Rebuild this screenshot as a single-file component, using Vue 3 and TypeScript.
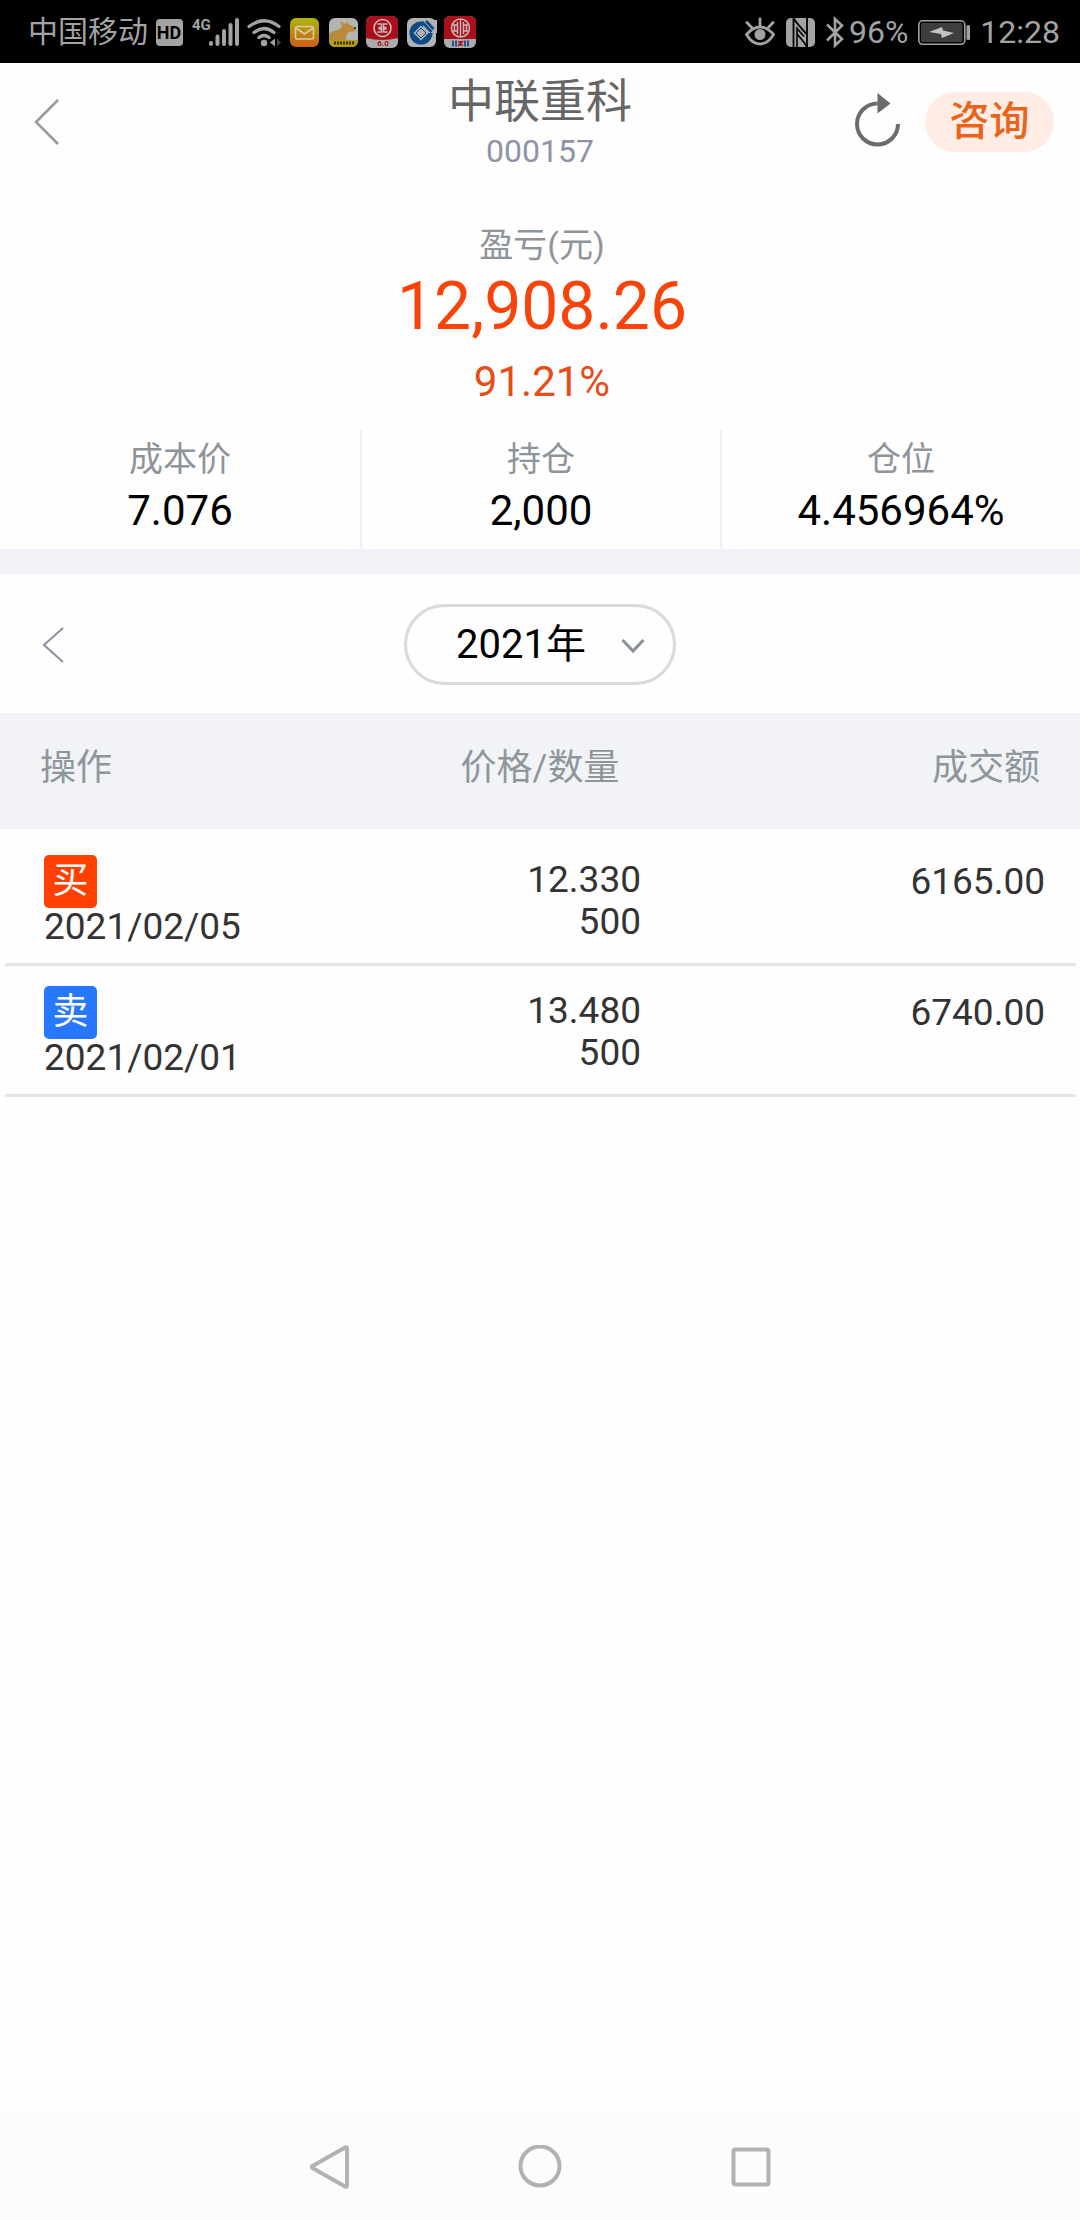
<script setup lang="ts">
import { ref } from 'vue'

interface Stat {
  label: string
  value: string
}

interface Trade {
  side: 'buy' | 'sell'
  date: string
  price: string
  quantity: string
  amount: string
}

const stats: Stat[] = [
  { label: '成本价', value: '7.076' },
  { label: '持仓', value: '2,000' },
  { label: '仓位', value: '4.456964%' },
]

const trades: Trade[] = [
  { side: 'buy', date: '2021/02/05', price: '12.330', quantity: '500', amount: '6165.00' },
  { side: 'sell', date: '2021/02/01', price: '13.480', quantity: '500', amount: '6740.00' },
]

const year = ref('2021')
</script>

<template>
  <div class="screen">
    <div class="status">
      <div class="status-left">
        <span class="carrier">中国移动</span>
        <svg width="29" height="32" viewBox="0 0 29 32">
          <rect x="1" y="3" width="27" height="27" rx="4" fill="#a3a3a3" />
          <text x="14" y="23" text-anchor="middle" class="hd">HD</text>
        </svg>
        <svg width="48" height="32" viewBox="0 0 48 32">
          <text x="1" y="14" class="net">4G</text>
          <g stroke="#a3a3a3" stroke-width="4" stroke-linecap="round">
            <path d="M20 27v1M26.500 20.500v7.500M33 15v13M39.500 9v19M46 4v24" />
          </g>
        </svg>
        <svg width="35" height="32" viewBox="0 0 35 32">
          <g fill="none" stroke="#a3a3a3" stroke-width="3.200" stroke-linecap="round">
            <path d="M3 10.500Q18 -1 33 10.500M8 16.500Q18 8.500 28 16.500M13 21.500Q18 17.500 23 21.500" />
          </g>
          <circle cx="18" cy="27" r="3.200" fill="#a3a3a3" />
          <path d="M29 22.500v8l-5-4z" fill="#a3a3a3" />
          <path d="M31 22.500v8l4-4z" fill="#444" />
        </svg>
        <svg width="32" height="32" viewBox="0 0 32 32">
          <defs>
            <linearGradient id="mail" x1="0" y1="0" x2="0" y2="1">
              <stop offset="0" stop-color="#adb50c" />
              <stop offset="1" stop-color="#cc5c16" />
            </linearGradient>
          </defs>
          <rect x="2" y="2" width="29" height="29" rx="6" fill="url(#mail)" />
          <rect x="7.500" y="10.500" width="18" height="12.500" rx="1.500" fill="none" stroke="#d8d0a8" stroke-width="1.600" />
          <path d="M8 12l8.500 6 8.500-6" fill="none" stroke="#d8d0a8" stroke-width="1.600" />
        </svg>
        <svg width="32" height="32" viewBox="0 0 32 32">
          <rect x="2" y="2" width="29" height="29" rx="6" fill="#b4b4b0" />
          <path d="M2 24v-6q3-3 9-4 3-1 4-4l-2-5 5 3 2-2 1 2q4 1 8 5l-1 2-6 1q-3 1-3 8z" fill="#b98a3c" />
          <path d="M2 24h29v1a6 6 0 0 1-6 6H8a6 6 0 0 1-6-6z" fill="#b59d18" />
          <path d="M7 27h20" stroke="#3e3510" stroke-width="3" stroke-dasharray="2 1" />
          <circle cx="28" cy="12" r="1" fill="#222" />
        </svg>
        <svg width="32" height="32" viewBox="0 0 32 32">
          <rect width="32" height="32" rx="6" fill="#aaa" />
          <path d="M0 22V6a6 6 0 0 1 6-6h20a6 6 0 0 1 6 6v16q-16 4-32 0z" fill="#a90f1b" />
          <circle cx="16.500" cy="12" r="8.500" fill="none" stroke="#c9b8b8" stroke-width="1.600" />
          <path d="M11.500 8h4v3.500h-3M11.500 16h4v-3h-3M21.500 8h-4v3.500h3M21.500 16h-4v-3h3" fill="none" stroke="#c9b8b8" stroke-width="1.500" />
          <text x="17" y="30" text-anchor="middle" class="tiny">6.0</text>
        </svg>
        <svg width="32" height="32" viewBox="0 0 32 32">
          <rect x="2" y="2" width="29" height="29" rx="6" fill="#b0b2b4" />
          <circle cx="16" cy="17" r="11.500" fill="#0c4a86" />
          <path d="M16 17l4-13 12 0v13z" fill="#b0b2b4" />
          <path d="M16 9.500l7.500 7.500-7.500 7.500L8.500 17z" fill="#b0b2b4" />
          <path d="M16 12l5 5-5 5-5-5z" fill="#b0b2b4" stroke="#0c4a86" />
          <path d="M17 6l9.500 10M21 5l7.500 8" stroke="#0c4a86" stroke-width="2.600" />
        </svg>
        <svg width="32" height="32" viewBox="0 0 32 32">
          <rect width="32" height="32" rx="6" fill="#aaa" />
          <path d="M0 23V6a6 6 0 0 1 6-6h20a6 6 0 0 1 6 6v17z" fill="#a90f1b" />
          <circle cx="16.500" cy="12" r="9" fill="none" stroke="#c9b8b8" stroke-width="1.500" />
          <path d="M16.500 4v16M13.500 6v12M19.500 6v12M9 9h4M9 15h4M20 9h4M20 15h4M10.500 9v6M22.500 9v6" stroke="#c9b8b8" stroke-width="1.400" />
          <path d="M8 27.500h5M20 27.500h5" stroke="#24558c" stroke-width="6" stroke-dasharray="2 1" />
          <path d="M14 30l5-5M14 26h3M16 29h3" stroke="#a90f1b" stroke-width="1.600" />
        </svg>
      </div>
      <div class="status-right">
        <svg width="32" height="32" viewBox="0 0 32 32">
          <g fill="none" stroke="#a3a3a3" stroke-width="2.800" stroke-linecap="round">
            <path d="M2.500 18.500Q9 11 16 11t13.500 7.500Q24 28 16 28T2.500 18.500z" />
            <path d="M16 9.500V3M8 12L3 6.500M24 12l5-5.500" />
          </g>
          <circle cx="16" cy="18.500" r="5.500" fill="#a3a3a3" />
        </svg>
        <svg width="29" height="32" viewBox="0 0 29 32">
          <rect y="2" width="29" height="29" rx="5" fill="#a3a3a3" />
          <path d="M7.500 2v29M7.500 2q2 4 13 16" fill="none" stroke="#000" stroke-width="1.800" />
          <path d="M21 31V2M21 31q-2-4-10-13" fill="none" stroke="#000" stroke-width="1.800" />
          <path d="M11 31V12.500l7 8" fill="none" stroke="#000" stroke-width="1.600" />
        </svg>
        <div class="bt-level">
          <svg width="20" height="32" viewBox="0 0 20 32">
            <path d="M2 8.500l15 14.500-7 6.500V3l7 6.500L2 24.500" fill="none" stroke="#a3a3a3" stroke-width="2.600" />
          </svg>
          <span>96%</span>
        </div>
        <svg width="52" height="32" viewBox="0 0 52 32">
          <rect x="0.800" y="4.800" width="46" height="23.500" rx="4" fill="none" stroke="#a3a3a3" stroke-width="1.600" />
          <rect x="3" y="7" width="41.500" height="19" rx="1.500" fill="#3e3e3e" />
          <path d="M11 16l13-5 1 3.500 11 2.500-12 5-1-4z" fill="#c4c4c4" />
          <rect x="48.500" y="9" width="3.500" height="15" rx="1.500" fill="#a3a3a3" />
        </svg>
        <span>12:28</span>
      </div>
    </div>

    <header class="header">
      <button class="icon-button back" aria-label="返回">
        <svg width="26" height="48" viewBox="0 0 26 48">
          <path d="M24 2L2 24l22 22" fill="none" stroke="#999" stroke-width="2.500" />
        </svg>
      </button>
      <div class="heading">
        <h1>中联重科</h1>
        <p>000157</p>
      </div>
      <div class="actions">
        <button class="icon-button" aria-label="刷新">
          <svg width="46" height="60" viewBox="0 0 46 60">
            <path d="M22.500 11.500A20.500 20.500 0 1 0 43 32" fill="none" stroke="#6b6b6b" stroke-width="4" />
            <path d="M22.500 1v20.500L35.500 11.500z" fill="#6b6b6b" />
          </svg>
        </button>
        <button class="consult">咨询</button>
      </div>
    </header>

    <main>
      <section class="profit">
        <p class="profit-label">盈亏(元)</p>
        <p class="profit-value">12,908.26</p>
        <p class="profit-rate">91.21%</p>
      </section>

      <dl class="stats">
        <div v-for="stat in stats" :key="stat.label" class="stat">
          <dt>{{ stat.label }}</dt>
          <dd>{{ stat.value }}</dd>
        </div>
      </dl>

      <div class="period">
        <button class="icon-button previous" aria-label="上一年">
          <svg width="22" height="36" viewBox="0 0 22 36">
            <path d="M21 1L2 18l19 17" fill="none" stroke="#8a909c" stroke-width="2" />
          </svg>
        </button>
        <div class="year">
          <select v-model="year" aria-label="年份">
            <option value="2021">2021年</option>
            <option value="2020">2020年</option>
          </select>
          <svg class="caret" width="24" height="16" viewBox="0 0 24 16">
            <path d="M1.500 2L12 13 22.500 2" fill="none" stroke="#8a909c" stroke-width="3" />
          </svg>
        </div>
      </div>

      <table class="trades">
        <thead>
          <tr>
            <th scope="col">操作</th>
            <th scope="col">价格/数量</th>
            <th scope="col">成交额</th>
          </tr>
        </thead>
        <tbody>
          <tr v-for="trade in trades" :key="trade.date">
            <td>
              <span class="side" :class="trade.side">{{ trade.side === 'buy' ? '买' : '卖' }}</span>
              <time>{{ trade.date }}</time>
            </td>
            <td>
              <div class="price">{{ trade.price }}</div>
              <div class="price">{{ trade.quantity }}</div>
            </td>
            <td>{{ trade.amount }}</td>
          </tr>
        </tbody>
      </table>
    </main>

    <nav class="system-nav">
      <button class="icon-button" aria-label="后退">
        <svg width="44" height="44" viewBox="0 0 44 44">
          <path d="M38 2.500Q40 1.500 40 4v36q0 2.500-2 1.500L5.500 23q-1.500-1 0-2z" fill="none" stroke="#b2b2b2" stroke-width="4" />
        </svg>
      </button>
      <button class="icon-button" aria-label="主屏幕">
        <svg width="44" height="44" viewBox="0 0 44 44">
          <circle cx="22" cy="21" r="19.500" fill="none" stroke="#b2b2b2" stroke-width="4" />
        </svg>
      </button>
      <button class="icon-button" aria-label="最近任务">
        <svg width="44" height="44" viewBox="0 0 44 44">
          <rect x="4.500" y="4.500" width="35" height="35" rx="2" fill="none" stroke="#b2b2b2" stroke-width="4" />
        </svg>
      </button>
    </nav>
  </div>
</template>

<style>
body {
  margin: 0;
  background: #fefefe;
}
</style>

<style scoped>
.screen {
  display: flex;
  flex-direction: column;
  min-height: 100vh;
  background: #fefefe;
  color: #333;
  font-family: Roboto, "Noto Sans CJK SC", sans-serif;
}

.screen * {
  box-sizing: border-box;
}

h1,
p,
dl,
dd {
  margin: 0;
  font-weight: 400;
}

button,
select {
  border: 0;
  padding: 0;
  background: none;
  font: inherit;
  color: inherit;
}

svg {
  display: block;
  flex: none;
}

.icon-button {
  display: flex;
  align-items: center;
  justify-content: center;
}

.status {
  display: flex;
  justify-content: space-between;
  padding: 1px 20px 0 28px;
  background: #000;
  color: #a3a3a3;
  font-size: 32px;
  line-height: 62px;
}

.status-left,
.status-right,
.bt-level {
  display: flex;
  align-items: center;
}

.status-left {
  gap: 7px;
}

.status-right {
  gap: 10px;
}

.bt-level {
  gap: 4px;
}

.carrier {
  font-size: 30px;
}

.hd {
  fill: #000;
  font-size: 18px;
  font-weight: 700;
}

.net {
  fill: #a3a3a3;
  font-size: 15px;
  font-weight: 700;
}

.tiny {
  fill: #a90f1b;
  font-size: 8px;
  font-weight: 700;
}

.header {
  display: grid;
  grid-template-columns: 1fr auto 1fr;
  align-items: center;
  min-height: 118px;
  padding: 0 26px;
}

.back {
  justify-self: start;
  padding-left: 8px;
}

.heading {
  align-self: end;
  padding-bottom: 5px;
  text-align: center;
  line-height: 50px;
}

.heading h1 {
  color: #666;
  font-size: 46px;
}

.heading p {
  color: #8e93a6;
  font-size: 32px;
}

.actions {
  display: flex;
  align-items: center;
  justify-content: flex-end;
  gap: 24px;
}

.consult {
  width: 129px;
  border-radius: 30px;
  background: #ffede5;
  color: #e8641b;
  font-size: 40px;
  font-weight: 500;
  line-height: 60px;
}

.profit {
  padding: 44px 0 16px 4px;
  text-align: center;
}

.profit-label {
  color: #8e9499;
  font-size: 34px;
  line-height: 40px;
}

.profit-value {
  color: #f8430a;
  font-size: 66px;
  line-height: 84px;
}

.profit-rate {
  color: #e84c17;
  font-size: 42px;
  line-height: 65px;
}

.stats {
  display: grid;
  grid-template-columns: repeat(3, 1fr);
  border-bottom: 25px solid #f1f2f7;
  text-align: center;
}

.stat {
  padding: 5px 0 10px;
}

.stat + .stat {
  border-left: 2px solid #f1f2f5;
}

.stat dt {
  color: #8e9499;
  font-size: 34px;
  line-height: 48px;
}

.stat dd {
  color: #000;
  font-size: 42px;
  line-height: 56px;
}

.period {
  display: grid;
  grid-template-columns: 1fr auto 1fr;
  align-items: center;
  padding: 30px 42px 28px;
}

.previous {
  justify-self: start;
}

.year {
  position: relative;
}

.year select {
  display: block;
  width: 272px;
  height: 81px;
  padding: 0 49px;
  border: 3px solid #dadada;
  border-radius: 41px;
  appearance: none;
  color: #000;
  font-size: 40px;
}

.caret {
  position: absolute;
  top: 34px;
  right: 31px;
  pointer-events: none;
}

.trades {
  width: 100%;
  border-collapse: collapse;
  table-layout: fixed;
}

.trades th {
  padding: 29px 40px 35px;
  background: #f1f3f7;
  color: #8e969c;
  font-size: 36px;
  font-weight: 400;
  line-height: 52px;
}

.trades th:first-child {
  text-align: left;
}

.trades th:last-child {
  text-align: right;
}

.trades tbody tr {
  background: linear-gradient(#e4e5e7, #e4e5e7) 5px 100% / calc(100% - 9px) 3px no-repeat;
}

.trades td {
  padding: 20px 35px 20px 44px;
  font-size: 37px;
  line-height: 54px;
  text-align: right;
  vertical-align: top;
}

.trades tr:first-child td {
  padding-top: 26px;
}

.trades td:first-child {
  text-align: left;
}

.trades td:nth-child(2) {
  padding-right: 79px;
}

.price {
  line-height: 42px;
}

.price:first-child {
  padding-top: 4px;
}

.side {
  display: block;
  width: 53px;
  border-radius: 5px;
  color: #fff;
  font-size: 36px;
  line-height: 53px;
  text-align: center;
}

.buy {
  background: #ff4000;
}

.sell {
  background: #2878ff;
}

.trades time {
  display: block;
  line-height: 38px;
}

.system-nav {
  display: grid;
  grid-template-columns: repeat(3, 211px);
  justify-content: center;
  margin-top: auto;
  padding: 31px 0;
  background: #fcfcfc;
}
</style>
